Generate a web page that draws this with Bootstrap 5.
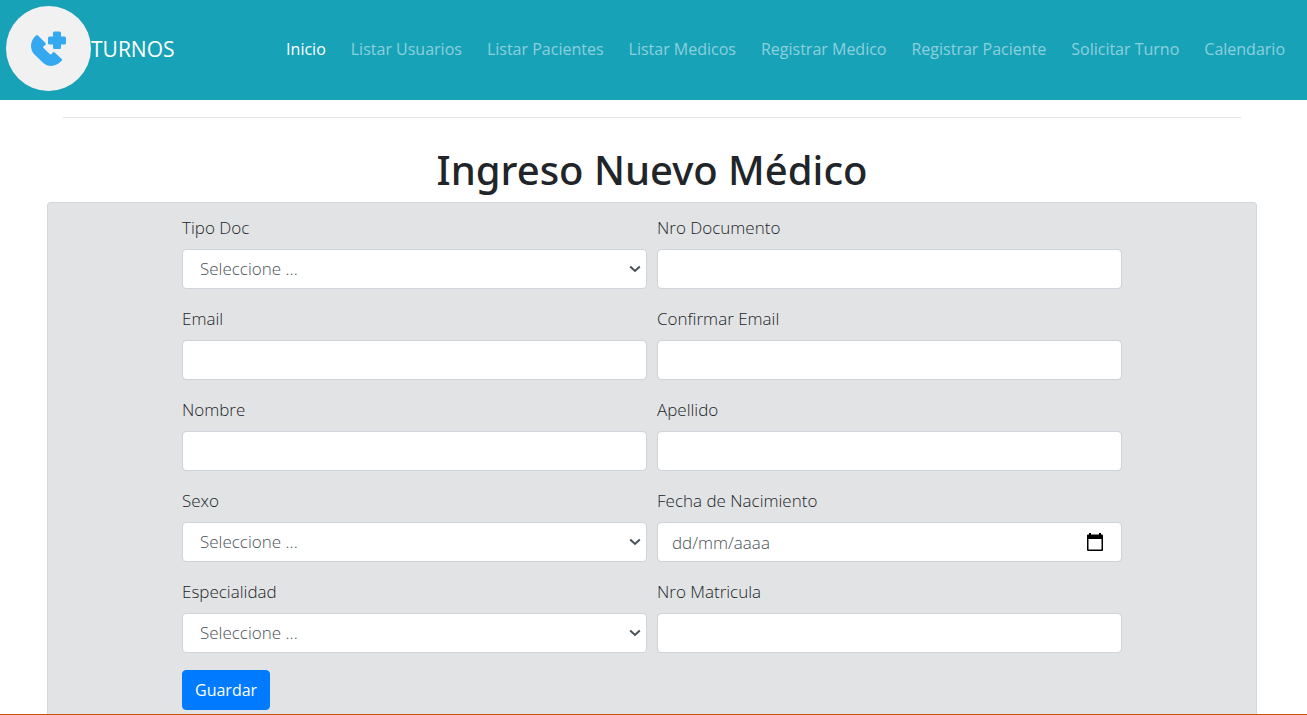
<!DOCTYPE html>
<html lang="es">
<head>
<meta charset="utf-8">
<meta name="viewport" content="width=device-width, initial-scale=1">
<title>Turnos - Ingreso Nuevo Médico</title>
<link href="https://cdn.jsdelivr.net/npm/bootstrap@5.3.0/dist/css/bootstrap.min.css" rel="stylesheet">
<style>
body { font-family: "Open Sans", "Noto Sans", sans-serif; font-size: 16px; line-height: 26px; color: #212529; }
.top-nav { background: #17a2b8; min-height: 100px; padding: 6px 14px 9px 6px; }
.top-nav .navbar-brand { font-size: 21px; margin: 0; padding: 0; color: #fff; }
.top-nav .navbar-nav { column-gap: 9px; }
.top-nav .nav-link { color: rgba(255, 255, 255, .5); white-space: nowrap; }
.top-nav .nav-link.active { color: #fff; }
.page-main { padding: 17px 50px 0 47px; }
.page-main hr { margin: 0 16px; border-color: rgba(0, 0, 0, .1); opacity: 1; }
.page-title { font-family: "Noto Sans", "Open Sans", sans-serif; font-size: 40px; line-height: 50px; font-weight: 500; margin: 27px 0 7px; }
.form-panel { background: #e2e3e5; border: 1px solid #d6d8db; border-bottom: 0; border-radius: 4px 4px 0 0; padding: 12px 134px 4px; }
.form-panel .row { --bs-gutter-x: 10px; }
.field { margin-bottom: 17px; }
.field .form-label { display: block; margin-bottom: 8px; font-size: 17px; font-weight: 300; }
.field .form-control, .field .form-select { height: 40px; border: 1px solid #ced4da; border-radius: 4px; padding: 6px 14px; font-size: 17px; font-weight: 300; color: #495057; background-color: #fff; }
.field .form-control::placeholder { color: #495057; opacity: 1; }
.field .form-select { padding-left: 17px; background-image: url("data:image/svg+xml,%3csvg xmlns='http://www.w3.org/2000/svg' viewBox='0 0 12 8'%3e%3cpath fill='none' stroke='%23495057' stroke-width='2' d='m1.2 1.5 4.8 4.5 4.8-4.5'/%3e%3c/svg%3e"); background-size: 12px 8px; background-position: right 5px center; }
.calendar-btn { position: absolute; top: 0; right: 18px; height: 40px; padding: 0; border: 0; background: none; display: flex; align-items: center; }
.btn-save { --bs-btn-bg: #007bff; --bs-btn-border-color: #007bff; --bs-btn-font-size: 16px; --bs-btn-line-height: 26px; --bs-btn-padding-x: 12px; --bs-btn-border-radius: 4px; height: 40px; }
.bottom-strip { height: 1px; background: #ca5010; }
</style>
</head>
<body class="d-flex flex-column min-vh-100">
<nav class="navbar navbar-expand-lg navbar-dark top-nav">
  <a class="navbar-brand d-flex align-items-center" href="#">
    <svg width="85" height="85" viewBox="0 0 85 85" aria-hidden="true">
      <circle cx="42.500" cy="42.500" r="42.500" fill="#f1f1f1"/>
      <path fill="#35a9ef" d="M48.500 25.500h5q1.500 0 1.500 1.500v3.500h3.500q1.500 0 1.500 1.500v5q0 1.500-1.500 1.500H55v3q0 1.500-1.500 1.500h-5q-1.500 0-1.500-1.500v-3h-3.500q-1.500 0-1.500-1.500v-5q0-1.500 1.500-1.500H47V27q0-1.500 1.500-1.500zM32 29.500l7.500 7.500q.8 1-.2 2l-1.800 1.300q-.7.900 0 1.700l6.500 6.200q.9.700 1.700-.1l1-1.500q1-1 2-.1l7.300 6.700q.6.700-.1 1.400c-3 3.200-7 5.400-10.900 5.400-3.500 0-6-1.500-8.500-3.800l-8.500-8.300c-2-2-3-5-3-8.200 0-3.800 2.200-7.700 5-10.200q1-.9 2 0z"/>
    </svg>
    <span>TURNOS</span>
  </a>
  <button class="navbar-toggler" type="button" data-bs-toggle="collapse" data-bs-target="#menu" aria-controls="menu" aria-label="Menú"><span class="navbar-toggler-icon"></span></button>
  <div class="collapse navbar-collapse" id="menu">
    <ul class="navbar-nav ms-auto">
      <li class="nav-item"><a class="nav-link active" aria-current="page" href="#">Inicio</a></li>
      <li class="nav-item"><a class="nav-link" href="#">Listar Usuarios</a></li>
      <li class="nav-item"><a class="nav-link" href="#">Listar Pacientes</a></li>
      <li class="nav-item"><a class="nav-link" href="#">Listar Medicos</a></li>
      <li class="nav-item"><a class="nav-link" href="#">Registrar Medico</a></li>
      <li class="nav-item"><a class="nav-link" href="#">Registrar Paciente</a></li>
      <li class="nav-item"><a class="nav-link" href="#">Solicitar Turno</a></li>
      <li class="nav-item"><a class="nav-link" href="#">Calendario</a></li>
    </ul>
  </div>
</nav>
<main class="page-main d-flex flex-column flex-grow-1">
  <hr>
  <h1 class="page-title text-center">Ingreso Nuevo Médico</h1>
  <form class="form-panel flex-grow-1">
    <div class="row">
      <div class="col-6 field">
        <label class="form-label" for="tipoDoc">Tipo Doc</label>
        <select class="form-select" id="tipoDoc"><option>Seleccione ...</option></select>
      </div>
      <div class="col-6 field">
        <label class="form-label" for="nroDoc">Nro Documento</label>
        <input type="text" class="form-control" id="nroDoc">
      </div>
      <div class="col-6 field">
        <label class="form-label" for="email">Email</label>
        <input type="email" class="form-control" id="email">
      </div>
      <div class="col-6 field">
        <label class="form-label" for="email2">Confirmar Email</label>
        <input type="email" class="form-control" id="email2">
      </div>
      <div class="col-6 field">
        <label class="form-label" for="nombre">Nombre</label>
        <input type="text" class="form-control" id="nombre">
      </div>
      <div class="col-6 field">
        <label class="form-label" for="apellido">Apellido</label>
        <input type="text" class="form-control" id="apellido">
      </div>
      <div class="col-6 field">
        <label class="form-label" for="sexo">Sexo</label>
        <select class="form-select" id="sexo"><option>Seleccione ...</option></select>
      </div>
      <div class="col-6 field">
        <label class="form-label" for="fecha">Fecha de Nacimiento</label>
        <div class="position-relative">
          <input type="text" class="form-control" id="fecha" placeholder="dd/mm/aaaa">
          <button type="button" class="calendar-btn" aria-label="Abrir calendario">
            <svg width="18" height="20" viewBox="0 0 18 20"><path fill="#000" fill-rule="evenodd" d="M3 1h2v1.500h8V1h2v1.500h1q1 0 1 1V18q0 1-1 1H2q-1 0-1-1V3.500q0-1 1-1h1zM2.500 7v10.500h13V7z"/></svg>
          </button>
        </div>
      </div>
      <div class="col-6 field">
        <label class="form-label" for="especialidad">Especialidad</label>
        <select class="form-select" id="especialidad"><option>Seleccione ...</option></select>
      </div>
      <div class="col-6 field">
        <label class="form-label" for="matricula">Nro Matricula</label>
        <input type="text" class="form-control" id="matricula">
      </div>
    </div>
    <button type="submit" class="btn btn-primary btn-save">Guardar</button>
  </form>
</main>
<footer class="bottom-strip"></footer>
<script src="https://cdn.jsdelivr.net/npm/bootstrap@5.3.0/dist/js/bootstrap.bundle.min.js"></script>
</body>
</html>
